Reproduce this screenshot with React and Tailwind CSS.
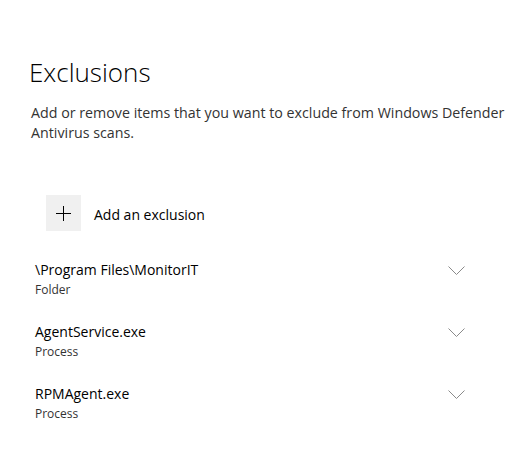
import React from 'react';

const exclusions = [
    { name: '\\Program Files\\MonitorIT', kind: 'Folder' },
    { name: 'AgentService.exe', kind: 'Process' },
    { name: 'RPMAgent.exe', kind: 'Process' },
];

const Chevron = () => (
    <svg width="17" height="9" viewBox="0 0 17 9" fill="none" className="text-[#8a8a8a]">
        <path d="M0.5 0.5 L8.5 8.5 L16.5 0.5" stroke="currentColor" strokeWidth="1" />
    </svg>
);

const App = () => {
    return (
        <div className="w-[518px] h-[451px] bg-white overflow-hidden font-['Open_Sans',sans-serif] pl-[29px] pt-[54px]">
            {/* Header */}
            <h1 className="text-[26px] font-light leading-[36px] text-black">Exclusions</h1>
            <p className="mt-[13px] w-[485px] pl-[2px] text-[14.25px] leading-[20px] text-[#333]">
                Add or remove items that you want to exclude from Windows Defender Antivirus scans.
            </p>

            {/* Add button */}
            <button className="mt-[52px] ml-[17px] flex items-center gap-[13px]">
                <span className="w-[35px] h-[36px] bg-[#f0f0f0] flex items-center justify-center">
                    <svg width="15" height="15" viewBox="0 0 15 15">
                        <path d="M7.5 0 V15 M0 7.5 H15" stroke="#000" strokeWidth="1" />
                    </svg>
                </span>
                <span className="text-[14px] text-black pt-[3px]">Add an exclusion</span>
            </button>

            {/* List */}
            <div className="mt-[28px] pl-[6px] w-[436px] flex flex-col gap-[22px]">
                {exclusions.map((item, i) => (
                    <div key={i} className="flex justify-between">
                        <div>
                            <p className="text-[14px] leading-[22px] text-black">{item.name}</p>
                            <p className="text-[12px] leading-[18px] text-[#333]">{item.kind}</p>
                        </div>
                        <div className="pt-[7px]">
                            <Chevron />
                        </div>
                    </div>
                ))}
            </div>
        </div>
    );
};

export default App;
